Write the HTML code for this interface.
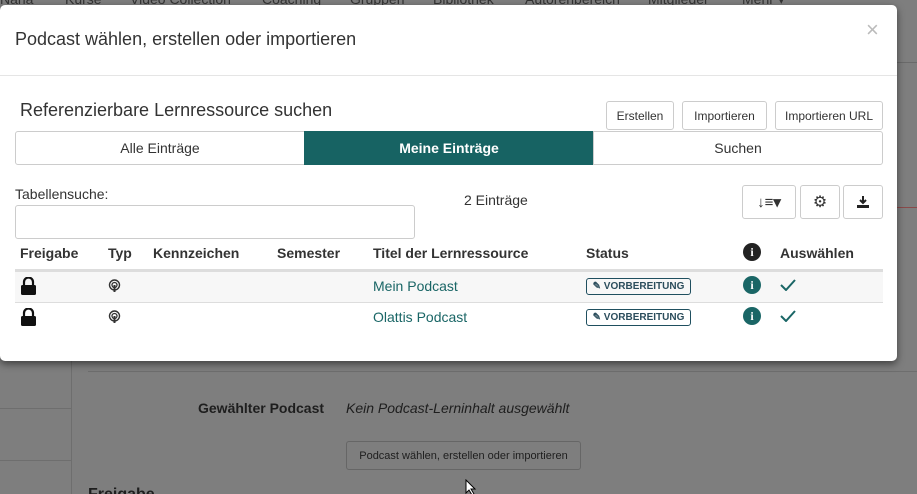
<!DOCTYPE html>
<html><head><meta charset="utf-8"><style>
*{box-sizing:border-box}
html,body{margin:0;width:917px;height:494px;overflow:hidden}
body{background:#7e7e7e;font-family:"Liberation Sans",sans-serif;position:relative;color:#222}
.nav{position:absolute;top:-9px;left:0;width:917px;height:14px;font-size:14px;color:#333;white-space:nowrap}
.nav span{position:absolute}
.modal{position:absolute;left:0;top:5px;width:897px;height:356px;background:#fff;border-radius:5px;box-shadow:0 3px 8px rgba(0,0,0,.5)}
.a{position:absolute;white-space:nowrap}
.btn{position:absolute;border:1px solid #ccc;border-radius:3px;background:#fff;font-size:12px;color:#333;display:flex;align-items:center;justify-content:center}
.th{position:absolute;top:240px;font-size:14px;font-weight:bold;color:#333}
.link{color:#1a6666;font-size:14px}
.badge{position:absolute;left:586px;width:105px;height:17px;border:1px solid #1f4f5f;border-radius:3px;font-size:10px;font-weight:bold;color:#2b4d5c;display:flex;align-items:center;justify-content:center}
.info{position:absolute;width:18px;height:18px;border-radius:50%;background:#1a6666;color:#fff;font-size:12px;font-weight:bold;text-align:center;line-height:18px;font-family:"Liberation Serif",serif}
</style></head><body>
<div class="nav"><span style="left:0">Nana</span><span style="left:65px">Kurse</span><span style="left:130px">Video Collection</span><span style="left:262px">Coaching</span><span style="left:350px">Gruppen</span><span style="left:433px">Bibliothek</span><span style="left:525px">Autorenbereich</span><span style="left:648px">Mitglieder</span><span style="left:742px">Mehr ▾</span></div>
<div style="position:absolute;left:897px;top:62px;width:20px;height:1px;background:#6a6a6a"></div>
<div style="position:absolute;left:897px;top:207px;width:20px;height:1px;background:#8a4a4a"></div>
<div style="position:absolute;left:71px;top:361px;width:1px;height:133px;background:#6e6e6e"></div>
<div style="position:absolute;left:0;top:408px;width:71px;height:1px;background:#6e6e6e"></div>
<div style="position:absolute;left:0;top:460px;width:71px;height:1px;background:#6e6e6e"></div>
<div style="position:absolute;left:88px;top:371px;width:829px;height:1px;background:#6e6e6e"></div>
<div class="a" style="left:198px;top:400px;font-size:14px;font-weight:bold;color:#1e1e1e">Gewählter Podcast</div>
<div class="a" style="left:346px;top:400px;font-size:14px;font-style:italic;color:#1e1e1e">Kein Podcast-Lerninhalt ausgewählt</div>
<div style="position:absolute;left:346px;top:441px;width:235px;height:29px;border:1px solid #666;border-radius:3px;background:#7e7e7e;font-size:11px;color:#1e1e1e;display:flex;align-items:center;justify-content:center">Podcast wählen, erstellen oder importieren</div>
<div class="a" style="left:88px;top:486px;font-size:16px;font-weight:bold;color:#1e1e1e">Freigabe</div>

<div class="modal">
<div class="a" style="left:15px;top:24px;font-size:18px;color:#333">Podcast wählen, erstellen oder importieren</div>
<div class="a" style="left:866px;top:12px;font-size:22px;color:#bbb">×</div>
<div style="position:absolute;left:0;top:70px;width:897px;height:1px;background:#e5e5e5"></div>
<div class="a" style="left:20px;top:95px;font-size:18px;color:#333">Referenzierbare Lernressource suchen</div>
<div class="btn" style="left:606px;top:96px;width:68px;height:29px">Erstellen</div>
<div class="btn" style="left:682px;top:96px;width:85px;height:29px">Importieren</div>
<div class="btn" style="left:775px;top:96px;width:108px;height:29px">Importieren URL</div>
<div class="btn" style="left:15px;top:126px;width:290px;height:34px;font-size:14px;border-radius:3px 0 0 3px">Alle Einträge</div>
<div class="btn" style="left:304px;top:126px;width:290px;height:34px;font-size:14px;background:#176363;border-color:#176363;color:#fff;font-weight:bold;border-radius:0">Meine Einträge</div>
<div class="btn" style="left:593px;top:126px;width:290px;height:34px;font-size:14px;border-radius:0 3px 3px 0">Suchen</div>
<div class="a" style="left:15px;top:181px;font-size:14px;color:#333">Tabellensuche:</div>
<div style="position:absolute;left:15px;top:200px;width:400px;height:34px;border:1px solid #ccc;border-radius:3px"></div>
<div class="a" style="left:464px;top:187px;font-size:14px;color:#333">2 Einträge</div>
<div class="btn" style="left:742px;top:180px;width:54px;height:34px;font-size:15px;font-weight:bold">↓≡▾</div>
<div class="btn" style="left:800px;top:180px;width:40px;height:34px;font-size:16px">⚙</div>
<div class="btn" style="left:843px;top:180px;width:40px;height:34px"><svg width="14" height="14" viewBox="0 0 14 14"><path d="M7 1v7M4 5l3 3 3-3" stroke="#222" stroke-width="2" fill="none"/><rect x="1" y="10" width="12" height="3" fill="#222"/></svg></div>
<div class="th" style="left:20px">Freigabe</div>
<div class="th" style="left:108px">Typ</div>
<div class="th" style="left:153px">Kennzeichen</div>
<div class="th" style="left:277px">Semester</div>
<div class="th" style="left:373px">Titel der Lernressource</div>
<div class="th" style="left:586px">Status</div>
<div class="info" style="left:743px;top:238px;background:#222">i</div>
<div class="th" style="left:780px">Auswählen</div>
<div style="position:absolute;left:15px;top:264px;width:868px;height:3px;background:#ddd"></div>
<div style="position:absolute;left:15px;top:267px;width:868px;height:30px;background:#f7f7f7"></div>
<div style="position:absolute;left:15px;top:297px;width:868px;height:1px;background:#ddd"></div>
<svg style="position:absolute;left:20px;top:272px" width="17" height="18" viewBox="0 0 17 18"><path d="M4 8V5a4.5 4.5 0 0 1 9 0v3" stroke="#111" stroke-width="2.2" fill="none"/><rect x="1" y="8" width="15" height="10" rx="1.5" fill="#111"/></svg>
<svg style="position:absolute;left:20px;top:303px" width="17" height="18" viewBox="0 0 17 18"><path d="M4 8V5a4.5 4.5 0 0 1 9 0v3" stroke="#111" stroke-width="2.2" fill="none"/><rect x="1" y="8" width="15" height="10" rx="1.5" fill="#111"/></svg>
<svg style="position:absolute;left:108px;top:274px" width="13" height="14" viewBox="0 0 13 14"><circle cx="6.5" cy="6" r="5" stroke="#333" stroke-width="1.4" fill="none"/><circle cx="6.5" cy="6" r="2.5" stroke="#333" stroke-width="1.3" fill="none"/><rect x="5.5" y="6" width="2" height="7" fill="#333"/></svg>
<svg style="position:absolute;left:108px;top:305px" width="13" height="14" viewBox="0 0 13 14"><circle cx="6.5" cy="6" r="5" stroke="#333" stroke-width="1.4" fill="none"/><circle cx="6.5" cy="6" r="2.5" stroke="#333" stroke-width="1.3" fill="none"/><rect x="5.5" y="6" width="2" height="7" fill="#333"/></svg>
<div class="a link" style="left:373px;top:273px">Mein Podcast</div>
<div class="a link" style="left:373px;top:304px">Olattis Podcast</div>
<div class="badge" style="top:273px">✎ VORBEREITUNG</div>
<div class="badge" style="top:304px">✎ VORBEREITUNG</div>
<div class="info" style="left:743px;top:271px">i</div>
<div class="info" style="left:743px;top:302px">i</div>
<svg style="position:absolute;left:780px;top:274px" width="16" height="12" viewBox="0 0 16 12"><path d="M1 6l5 5L15 1" stroke="#1a6666" stroke-width="2" fill="none"/></svg>
<svg style="position:absolute;left:780px;top:305px" width="16" height="12" viewBox="0 0 16 12"><path d="M1 6l5 5L15 1" stroke="#1a6666" stroke-width="2" fill="none"/></svg>
</div>
<svg style="position:absolute;left:465px;top:479px" width="12" height="16" viewBox="0 0 12 16"><path d="M1 1v13l3-3 3 5 2-1-3-5h4z" fill="#fff" stroke="#000"/></svg>
</body></html>
